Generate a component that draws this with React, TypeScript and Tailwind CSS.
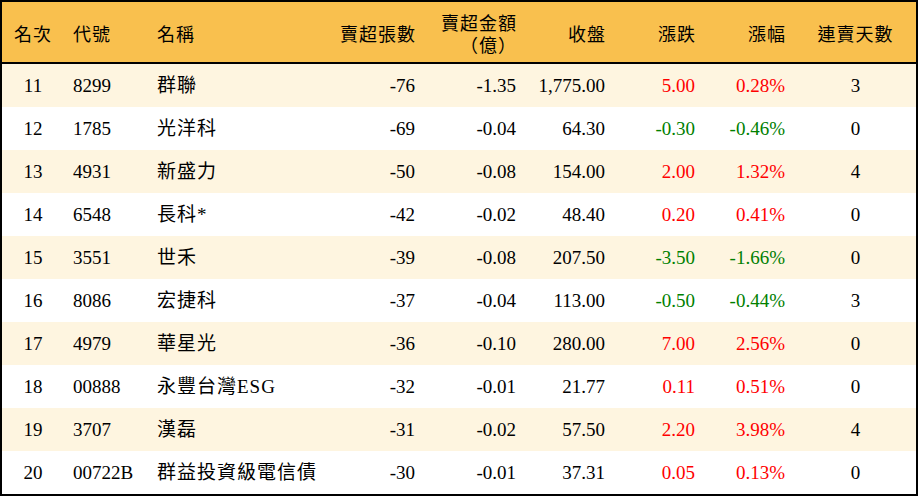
import React from 'react';

type Row = {
    rank: number;
    code: string;
    name: string;
    lots: string;
    amount: string;
    close: string;
    change: string;
    pct: string;
    days: number;
};

const rows: Row[] = [
    { rank: 11, code: '8299', name: '群聯', lots: '-76', amount: '-1.35', close: '1,775.00', change: '5.00', pct: '0.28%', days: 3 },
    { rank: 12, code: '1785', name: '光洋科', lots: '-69', amount: '-0.04', close: '64.30', change: '-0.30', pct: '-0.46%', days: 0 },
    { rank: 13, code: '4931', name: '新盛力', lots: '-50', amount: '-0.08', close: '154.00', change: '2.00', pct: '1.32%', days: 4 },
    { rank: 14, code: '6548', name: '長科*', lots: '-42', amount: '-0.02', close: '48.40', change: '0.20', pct: '0.41%', days: 0 },
    { rank: 15, code: '3551', name: '世禾', lots: '-39', amount: '-0.08', close: '207.50', change: '-3.50', pct: '-1.66%', days: 0 },
    { rank: 16, code: '8086', name: '宏捷科', lots: '-37', amount: '-0.04', close: '113.00', change: '-0.50', pct: '-0.44%', days: 3 },
    { rank: 17, code: '4979', name: '華星光', lots: '-36', amount: '-0.10', close: '280.00', change: '7.00', pct: '2.56%', days: 0 },
    { rank: 18, code: '00888', name: '永豐台灣ESG', lots: '-32', amount: '-0.01', close: '21.77', change: '0.11', pct: '0.51%', days: 0 },
    { rank: 19, code: '3707', name: '漢磊', lots: '-31', amount: '-0.02', close: '57.50', change: '2.20', pct: '3.98%', days: 4 },
    { rank: 20, code: '00722B', name: '群益投資級電信債', lots: '-30', amount: '-0.01', close: '37.31', change: '0.05', pct: '0.13%', days: 0 },
];

const font = { fontFamily: "'Liberation Serif', 'Noto Sans CJK TC', serif" };

export default function App() {
    return (
        <div className="w-[918px] h-[496px] bg-white border-2 border-black" style={font}>
            <table className="w-full table-fixed border-separate border-spacing-0 text-[19px] text-black">
                <colgroup>
                    <col className="w-[62px]" />
                    <col className="w-[84px]" />
                    <col className="w-[177px]" />
                    <col className="w-[100px]" />
                    <col className="w-[101px]" />
                    <col className="w-[89px]" />
                    <col className="w-[90px]" />
                    <col className="w-[90px]" />
                    <col className="w-[121px]" />
                </colgroup>
                <thead>
                    <tr className="bg-[#f9c04e] text-[18px] tracking-[1px] [&>th]:h-[62px] [&>th]:border-b-2 [&>th]:border-solid [&>th]:border-black [&>th]:font-normal [&>th]:pt-[6px]">
                        <th className="text-center">名次</th>
                        <th className="text-left pl-[9px]">代號</th>
                        <th className="text-left pl-[9px]">名稱</th>
                        <th className="text-right pr-[9px]">賣超張數</th>
                        <th className="text-right pr-[9px] leading-[22px]">
                            賣超金額
                            <br />
                            （億）
                        </th>
                        <th className="text-right pr-[9px]">收盤</th>
                        <th className="text-right pr-[9px]">漲跌</th>
                        <th className="text-right pr-[9px]">漲幅</th>
                        <th className="text-center">連賣天數</th>
                    </tr>
                </thead>
                <tbody>
                    {rows.map((r, i) => {
                        const up = !r.change.startsWith('-');
                        const color = up ? 'text-[#ff0000]' : 'text-[#008000]';
                        return (
                            <tr
                                key={r.rank}
                                className={`[&>td]:h-[43px] [&>td]:pt-[2px] ${i % 2 === 0 ? 'bg-[#fef5e0]' : 'bg-white'}`}
                            >
                                <td className="text-center">{r.rank}</td>
                                <td className="text-left pl-[9px]">{r.code}</td>
                                <td className="text-left pl-[9px] tracking-[1px] whitespace-nowrap">{r.name}</td>
                                <td className="text-right pr-[10px]">{r.lots}</td>
                                <td className="text-right pr-[10px]">{r.amount}</td>
                                <td className="text-right pr-[10px]">{r.close}</td>
                                <td className={`text-right pr-[10px] ${color}`}>{r.change}</td>
                                <td className={`text-right pr-[10px] ${color}`}>{r.pct}</td>
                                <td className="text-center">{r.days}</td>
                            </tr>
                        );
                    })}
                </tbody>
            </table>
        </div>
    );
}
